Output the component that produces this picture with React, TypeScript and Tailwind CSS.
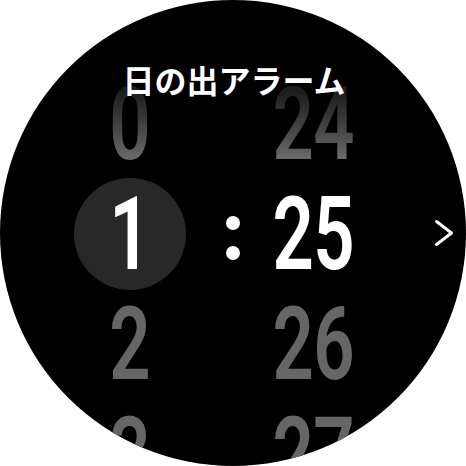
const hours = ['0', '1', '2', '3']
const minutes = ['24', '25', '26', '27']

const digitFont = { fontFamily: 'Roboto, "Liberation Sans", sans-serif' }

function Digits({ value, row, selected }: { value: string; row: number; selected: number }) {
  const active = row === selected
  const fade = row === 0
  return (
    <span
      className={`inline-block scale-x-[0.71] text-[102px] font-semibold leading-[110px] tracking-[-1px] ${
        active
          ? 'text-white'
          : fade
            ? 'bg-gradient-to-b from-[#1c1c1c] from-[20%] to-[#686868] to-[80%] bg-clip-text text-transparent'
            : 'text-[#666666]'
      }`}
      style={digitFont}
    >
      {value}
    </span>
  )
}

export default function App() {
  const selected = 1

  return (
    <div className="w-[466px] h-[466px] bg-white">
      <div className="relative w-[466px] h-[466px] rounded-full bg-black overflow-hidden">
        <div className="grid grid-cols-[74px_112px_94px_67px] auto-rows-[110px] pt-[69px]">
          {hours.map((h, i) => (
            <div key={h} className="contents">
              <div />
              <div className="flex items-center justify-center">
                {i === selected ? (
                  <div className="w-[112px] h-[112px] shrink-0 rounded-full bg-[#282828] flex items-center justify-center">
                    <Digits value={h} row={i} selected={selected} />
                  </div>
                ) : (
                  <Digits value={h} row={i} selected={selected} />
                )}
              </div>
              <div className="flex flex-col items-center justify-center gap-[16px] pt-[7px]">
                {i === selected && (
                  <>
                    <span className="w-[14px] h-[14px] rounded-full bg-white" />
                    <span className="w-[14px] h-[14px] rounded-full bg-white" />
                  </>
                )}
              </div>
              <div className="flex items-center justify-center">
                <Digits value={minutes[i]} row={i} selected={selected} />
              </div>
            </div>
          ))}
        </div>

        <div
          className="absolute top-[63px] left-0 w-full pl-[2px] text-center text-[32px] leading-[32px] font-semibold text-white"
          style={{ fontFamily: '"Noto Sans CJK JP", sans-serif' }}
        >
          日の出アラーム
        </div>

        <svg
          className="absolute left-[432px] top-[218px]"
          width="24"
          height="30"
          viewBox="0 0 24 30"
          fill="none"
        >
          <polyline
            points="4.5,3.5 19.5,15 4.5,26.5"
            stroke="white"
            strokeWidth="3"
            strokeLinecap="round"
            strokeLinejoin="round"
          />
        </svg>
      </div>
    </div>
  )
}
